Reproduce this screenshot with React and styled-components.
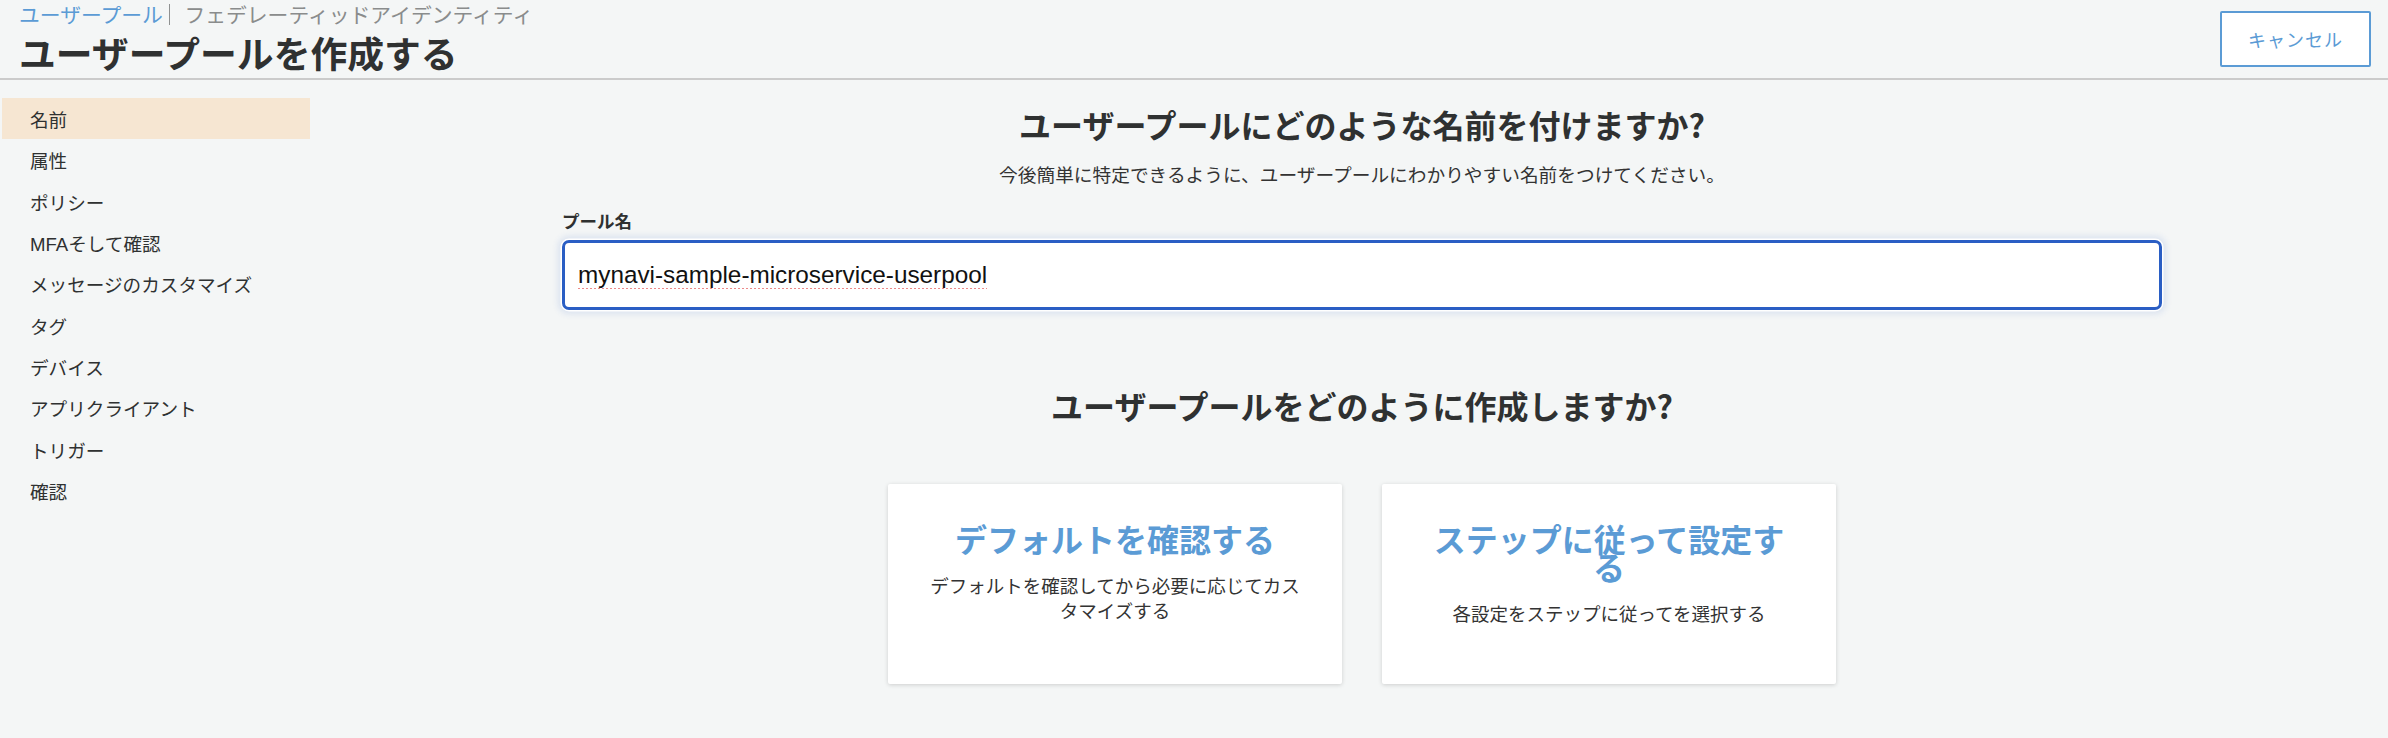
import React, { useState } from 'react';
import styled, { createGlobalStyle } from 'styled-components';

const GlobalStyle = createGlobalStyle`
    html, body {
        margin: 0;
        padding: 0;
        background: #f4f6f6;
    }
    body {
        font-family: "Liberation Sans", "Noto Sans CJK JP", sans-serif;
        color: #333333;
    }
    * {
        box-sizing: border-box;
    }
`;

const Page = styled.div`
    width: 2388px;
    height: 738px;
    background: #f4f6f6;
    overflow: hidden;
`;

const Header = styled.header`
    display: flex;
    justify-content: space-between;
    align-items: center;
    height: 80px;
    padding: 0 17px 0 19px;
    border-bottom: 2px solid #cbcbcb;
`;

const TitleBlock = styled.div`
    display: flex;
    flex-direction: column;
`;

const Breadcrumb = styled.div`
    display: flex;
    align-items: center;
    height: 26px;
    font-family: "Noto Sans CJK JP", sans-serif;
    font-size: 20.8px;
    color: #8a8c8c;
`;

const CrumbLink = styled.span`
    color: #5b9bd5;
`;

const CrumbBar = styled.span`
    display: inline-block;
    width: 1.5px;
    height: 21px;
    background: #8f9191;
    margin: 0 14px 0 6px;
`;

const PageTitle = styled.h1`
    margin: 0;
    height: 50px;
    line-height: 50px;
    font-family: "Noto Sans CJK JP", sans-serif;
    font-size: 36.8px;
    font-weight: 700;
    color: #2f3131;
`;

const CancelButton = styled.button`
    width: 151px;
    height: 56px;
    background: #ffffff;
    border: 2px solid #5b9bd5;
    border-radius: 2px;
    color: #5b9bd5;
    font-family: "Noto Sans CJK JP", sans-serif;
    font-size: 18px;
    letter-spacing: 1px;
    cursor: pointer;
`;

const Body = styled.div`
    display: flex;
    align-items: flex-start;
`;

const Sidebar = styled.nav`
    width: 308px;
    margin-left: 2px;
    padding-top: 18px;
    display: flex;
    flex-direction: column;
`;

const NavItem = styled.div`
    height: 41.3px;
    display: flex;
    align-items: center;
    padding-left: 28px;
    font-family: "Liberation Sans", "Noto Sans CJK JP", sans-serif;
    font-size: 18.6px;
    color: #2f3131;
    background: ${(p) => (p.$active ? '#f6e6d2' : 'transparent')};
`;

const Main = styled.main`
    flex: 1;
    display: flex;
    flex-direction: column;
    padding: 24px 226px 0 252px;
`;

const Question = styled.h2`
    margin: ${(p) => p.$top || 0}px 0 0;
    line-height: 40px;
    text-align: center;
    font-family: "Noto Sans CJK JP", sans-serif;
    font-size: 32px;
    font-weight: 700;
    color: #2f3131;
`;

const Lead = styled.p`
    margin: 17px 0 0;
    line-height: 26px;
    text-align: center;
    font-family: "Noto Sans CJK JP", sans-serif;
    font-size: 18.7px;
    color: #333333;
`;

const FieldLabel = styled.label`
    margin-top: 23px;
    line-height: 22px;
    font-family: "Noto Sans CJK JP", sans-serif;
    font-size: 17.5px;
    font-weight: 700;
    color: #2f3131;
`;

const NameInput = styled.input`
    margin-top: 8px;
    width: 100%;
    height: 70px;
    padding: 0 13px;
    background: #ffffff;
    border: 3px solid #2a5ec4;
    border-radius: 7px;
    box-shadow: 0 0 0 1.5px #ffffff, 0 0 6px 4px rgba(42, 94, 196, 0.12);
    outline: none;
    font-family: "Liberation Sans", sans-serif;
    font-size: 24.3px;
    color: #111111;
    text-decoration: underline dotted #ec8a8a;
    text-decoration-thickness: 2px;
    text-underline-offset: 5px;
`;

const Choices = styled.div`
    margin-top: 59px;
    display: flex;
    justify-content: center;
    gap: 40px;
`;

const ChoiceCard = styled.div`
    width: 454px;
    height: 200px;
    padding: 40px 38px 0;
    background: #ffffff;
    border-radius: 2px;
    box-shadow: 0 1px 4px rgba(0, 0, 0, 0.16);
    text-align: center;
    cursor: pointer;
`;

const ChoiceTitle = styled.div`
    line-height: 28px;
    font-family: "Noto Sans CJK JP", sans-serif;
    font-size: 32px;
    font-weight: 700;
    color: #5b9bd5;
`;

const ChoiceText = styled.div`
    margin-top: 21px;
    line-height: 24.5px;
    font-family: "Noto Sans CJK JP", sans-serif;
    font-size: 18.5px;
    color: #333333;
`;

const steps = [
    '名前',
    '属性',
    'ポリシー',
    'MFAそして確認',
    'メッセージのカスタマイズ',
    'タグ',
    'デバイス',
    'アプリクライアント',
    'トリガー',
    '確認',
];

export default function App() {
    const [poolName, setPoolName] = useState('mynavi-sample-microservice-userpool');

    return (
        <Page>
            <GlobalStyle />
            <Header>
                <TitleBlock>
                    <Breadcrumb>
                        <CrumbLink>ユーザープール</CrumbLink>
                        <CrumbBar />
                        <span>フェデレーティッドアイデンティティ</span>
                    </Breadcrumb>
                    <PageTitle>ユーザープールを作成する</PageTitle>
                </TitleBlock>
                <CancelButton>キャンセル</CancelButton>
            </Header>

            <Body>
                <Sidebar>
                    {steps.map((step, i) => (
                        <NavItem key={step} $active={i === 0}>
                            {step}
                        </NavItem>
                    ))}
                </Sidebar>

                <Main>
                    <Question>ユーザープールにどのような名前を付けますか?</Question>
                    <Lead>今後簡単に特定できるように、ユーザープールにわかりやすい名前をつけてください。</Lead>
                    <FieldLabel htmlFor="pool-name">プール名</FieldLabel>
                    <NameInput
                        id="pool-name"
                        value={poolName}
                        onChange={(e) => setPoolName(e.target.value)}
                    />

                    <Question $top={75}>ユーザープールをどのように作成しますか?</Question>

                    <Choices>
                        <ChoiceCard>
                            <ChoiceTitle>デフォルトを確認する</ChoiceTitle>
                            <ChoiceText>デフォルトを確認してから必要に応じてカスタマイズする</ChoiceText>
                        </ChoiceCard>
                        <ChoiceCard>
                            <ChoiceTitle>ステップに従って設定する</ChoiceTitle>
                            <ChoiceText>各設定をステップに従ってを選択する</ChoiceText>
                        </ChoiceCard>
                    </Choices>
                </Main>
            </Body>
        </Page>
    );
}
